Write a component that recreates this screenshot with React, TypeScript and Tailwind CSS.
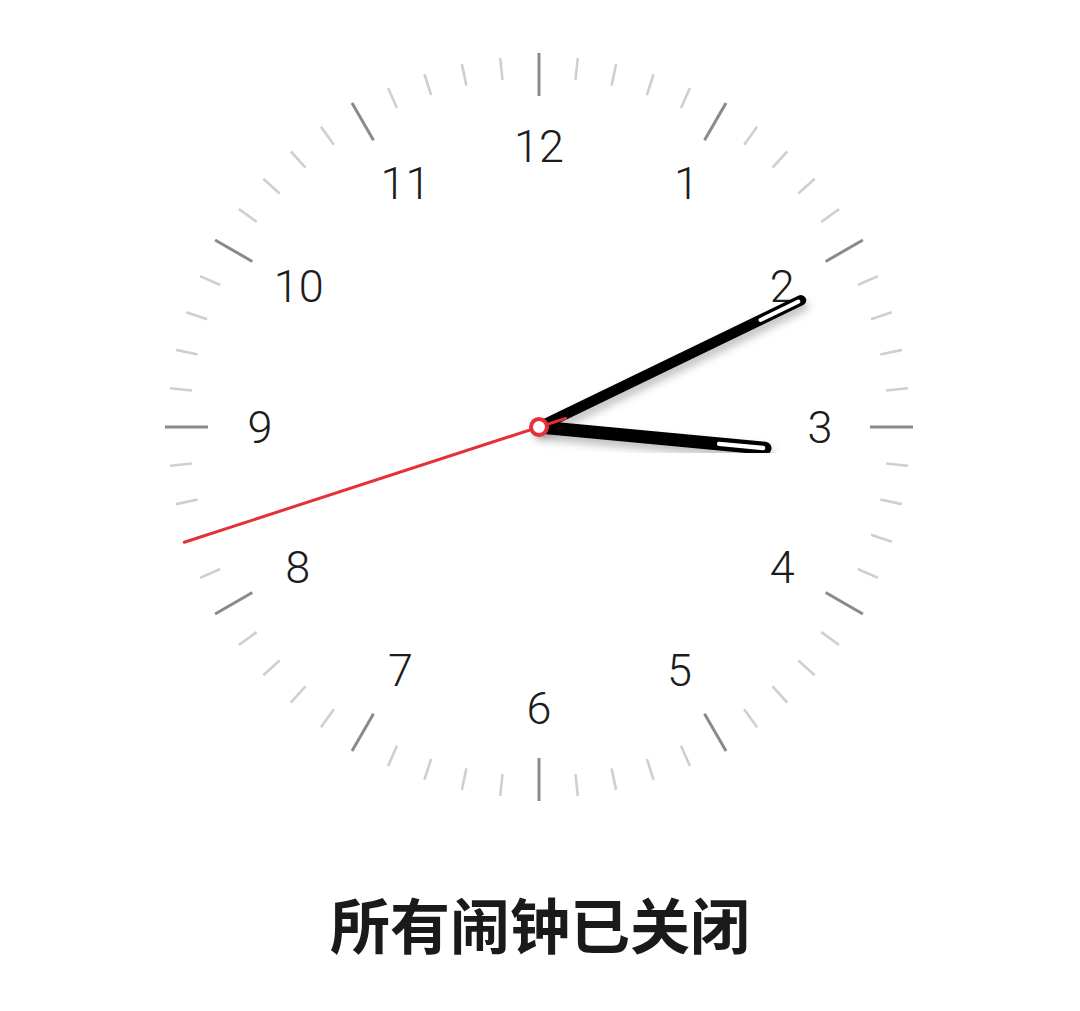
import React from "react";

const C = 0;
function pt(angleDeg: number, r: number) {
  const a = (angleDeg * Math.PI) / 180;
  return { x: C + r * Math.sin(a), y: C - r * Math.cos(a) };
}

function Hand({ angle, len, width, slotFrom, slotTo, slotW }: { angle: number; len: number; width: number; slotFrom: number; slotTo: number; slotW: number }) {
  const s = pt(angle, 0);
  const e = pt(angle, len);
  const a = pt(angle, slotFrom);
  const b = pt(angle, slotTo);
  return (
    <g>
      <line x1={s.x} y1={s.y} x2={e.x} y2={e.y} stroke="#050505" strokeWidth={width} strokeLinecap="round" filter="url(#sh)" />
      <line x1={a.x} y1={a.y} x2={b.x} y2={b.y} stroke="#ffffff" strokeWidth={slotW} strokeLinecap="round" />
    </g>
  );
}

export default function App() {
  const ticks = Array.from({ length: 60 }, (_, i) => i);
  const nums = [12, 1, 2, 3, 4, 5, 6, 7, 8, 9, 10, 11];
  const shift: Record<number, number> = { 1: 7, 11: 7, 10: 3, 7: 2, 8: 2, 9: 2 };
  const hourA = 90 + (10.7 / 60) * 30;
  const minA = (10 + 42 / 60) * 6;
  const secA = 42 * 6;
  const st = pt(secA + 180, 28);
  const se = pt(secA, 373);
  return (
    <div className="w-[1080px] h-[1011px] bg-white flex flex-col items-center pt-[47px]">
      <svg width="760" height="760" viewBox="-380 -380 760 760" className="block ml-[-2px] font-['Roboto',sans-serif]">
        <defs>
          <filter id="sh" x="-20%" y="-20%" width="140%" height="140%">
            <feDropShadow dx="2" dy="6" stdDeviation="4.5" floodColor="#000" floodOpacity="0.25" />
          </filter>
        </defs>
        {ticks.map((i) => {
          const major = i % 5 === 0;
          const a = pt(i * 6, major ? 331 : 349);
          const b = pt(i * 6, major ? 374 : 371);
          return (
            <line key={i} x1={a.x} y1={a.y} x2={b.x} y2={b.y} stroke={major ? "#8a8a8a" : "#cfcfcf"} strokeWidth={major ? 3 : 2.6} />
          );
        })}
        {nums.map((n, i) => {
          const p = pt(i * 30, 281);
          return (
            <text key={n} x={p.x + (shift[n] || 0)} y={p.y} textAnchor="middle" dominantBaseline="central" fontSize="45" fill="#1c1c1c" fontWeight={350}>
              {n}
            </text>
          );
        })}
        <Hand angle={hourA} len={227} width={13} slotFrom={181} slotTo={225} slotW={4.5} />
        <Hand angle={minA} len={291} width={10.5} slotFrom={246} slotTo={288} slotW={4} />
        <line x1={st.x} y1={st.y} x2={se.x} y2={se.y} stroke="#e5303a" strokeWidth={3} strokeLinecap="round" />
        <circle cx={0} cy={0} r={8} fill="#ffffff" stroke="#e5303a" strokeWidth={4} />
      </svg>
      <div className="mt-[86px] text-[60px] leading-none font-bold text-[#1a1a1a] font-['Noto_Sans_CJK_SC',sans-serif]">
        所有闹钟已关闭
      </div>
    </div>
  );
}
